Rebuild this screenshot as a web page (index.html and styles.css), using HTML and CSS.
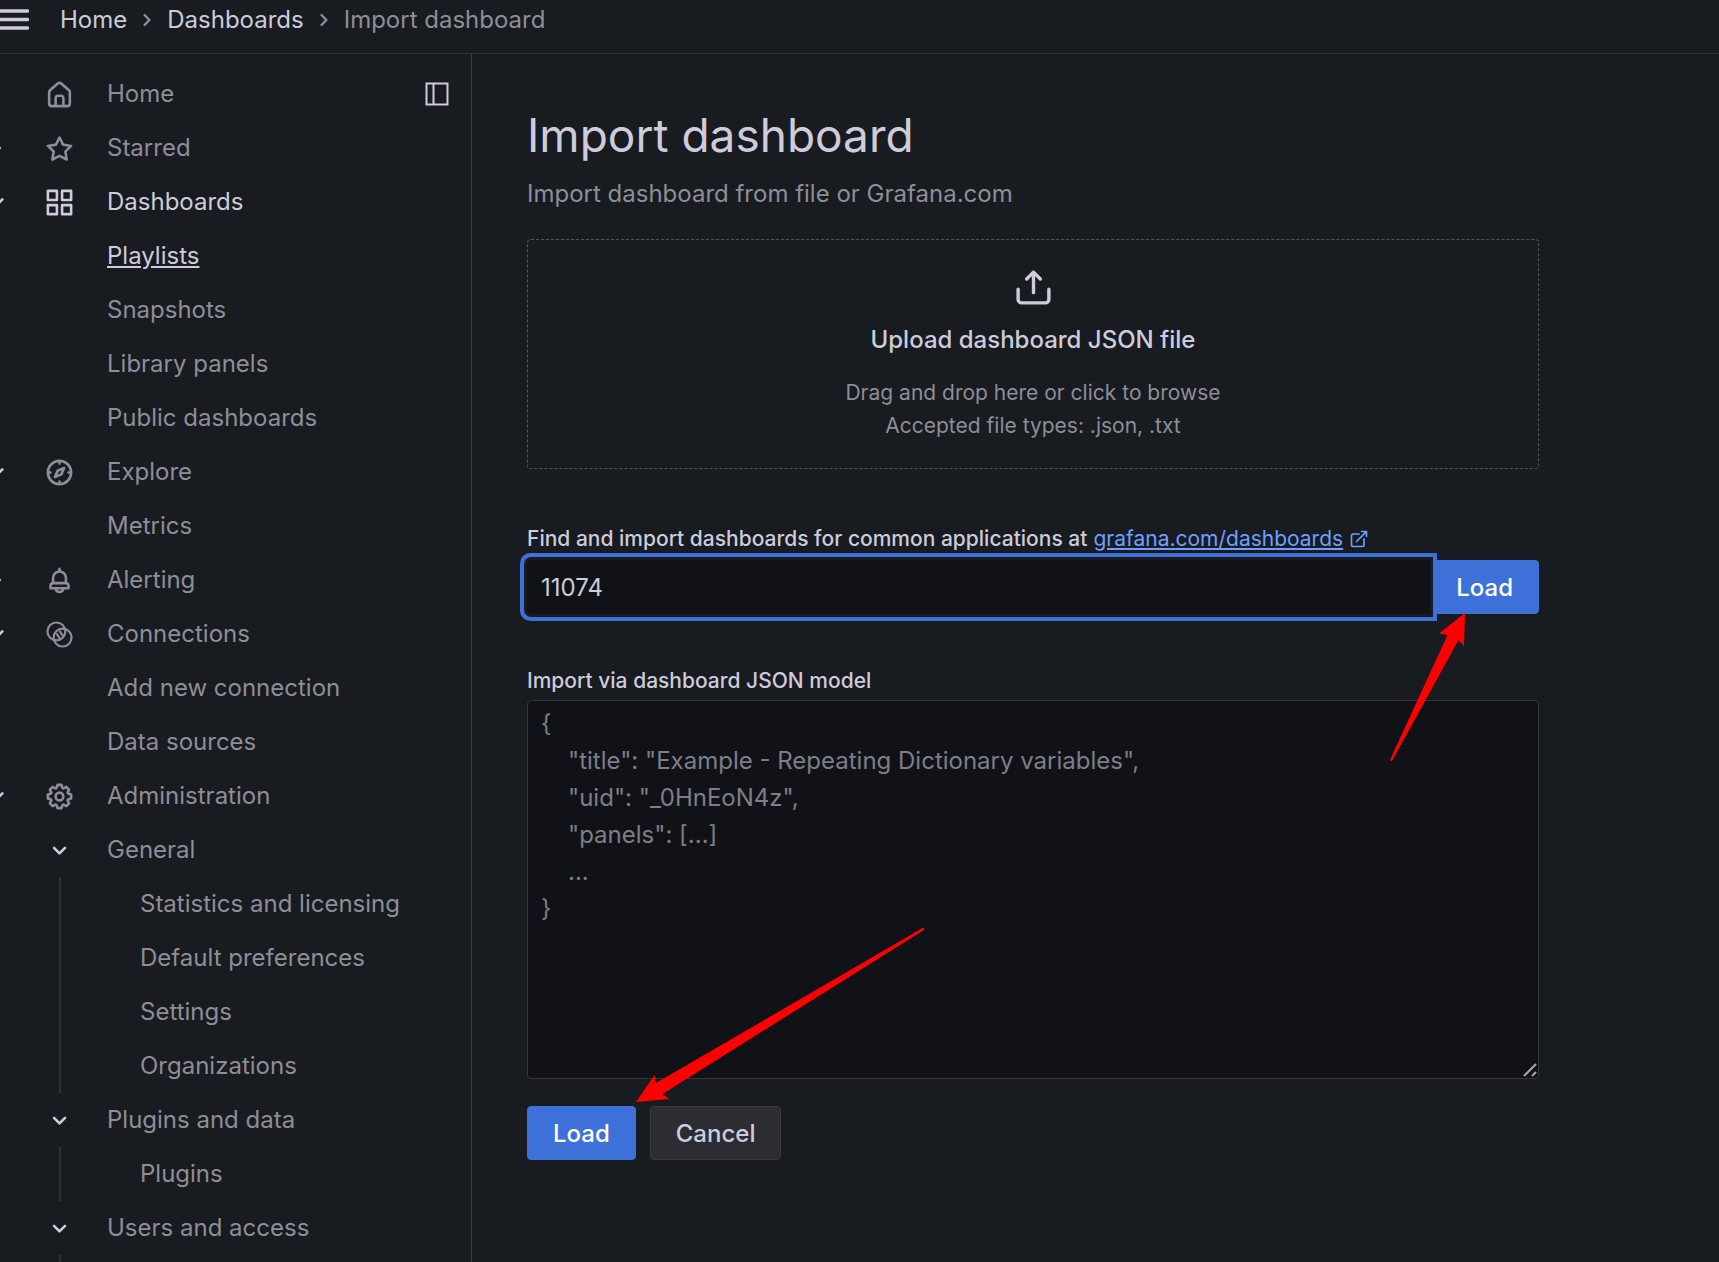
FILE: index.html
```html
<!DOCTYPE html>
<html lang="en">
<head>
<meta charset="utf-8">
<title>Import dashboard - Grafana</title>
<meta name="viewport" content="width=device-width, initial-scale=1">
<link rel="stylesheet" href="styles.css">
</head>
<body>
<svg class="sprite" aria-hidden="true">
  <symbol id="chevron-down" viewBox="0 0 24 24"><path d="M17 9.2a1 1 0 0 0-1.42 0L12 12.7 8.46 9.2a1 1 0 0 0-1.42 1.4l4.25 4.25a1 1 0 0 0 1.42 0L17 10.6a1 1 0 0 0 0-1.4Z"/></symbol>
  <symbol id="chevron-right" viewBox="0 0 24 24"><path d="M14.83 11.29 10.59 7.05a1 1 0 0 0-1.42 1.41L12.71 12l-3.54 3.54a1 1 0 0 0 1.42 1.41l4.24-4.24a1 1 0 0 0 0-1.42Z"/></symbol>
</svg>
<header class="topbar">
  <button class="menu-button" aria-label="Open menu">
    <svg width="29" height="22" viewBox="0 0 29 22"><path d="M0 2h27.500M0 10.500h27.500M0 19h27.500" fill="none" stroke="currentColor" stroke-width="3.400" stroke-linecap="round"/></svg>
  </button>
  <nav class="breadcrumbs" aria-label="Breadcrumbs">
    <a href="#">Home</a>
    <svg class="separator"><use href="#chevron-right"/></svg>
    <a href="#">Dashboards</a>
    <svg class="separator"><use href="#chevron-right"/></svg>
    <span class="current">Import dashboard</span>
  </nav>
</header>
<div class="layout">
  <nav class="sidebar" aria-label="Main navigation">
    <ul class="nav-list">
      <li class="nav-row">
        <svg class="nav-icon" viewBox="0 0 24 24"><path d="M20,8h0L14,2.740a3,3,0,0,0-4,0L4,8a3,3,0,0,0-1,2.260V19a3,3,0,0,0,3,3H18a3,3,0,0,0,3-3V10.250A3,3,0,0,0,20,8ZM14,20H10V15a1,1,0,0,1,1-1h2a1,1,0,0,1,1,1Zm5-1a1,1,0,0,1-1,1H16V15a3,3,0,0,0-3-3H11a3,3,0,0,0-3,3v5H6a1,1,0,0,1-1-1V10.250a1,1,0,0,1,.34-.75l6-5.250a1,1,0,0,1,1.320,0l6,5.250a1,1,0,0,1,.34.75Z"/></svg>
        <a href="#">Home</a>
        <button class="dock-button" aria-label="Undock menu"><svg width="24" height="24" viewBox="0 0 24 24"><path d="M1.500 1.500h21v21h-21zM8.500 1.500v21" fill="none" stroke="currentColor" stroke-width="2"/></svg></button>
      </li>
      <li class="nav-row">
        <svg class="chevron"><use href="#chevron-right"/></svg>
        <svg class="nav-icon" viewBox="0 0 24 24"><path d="M22,9.670A1,1,0,0,0,21.140,9l-5.690-.83L12.900,3a1,1,0,0,0-1.800,0L8.550,8.160,2.860,9a1,1,0,0,0-.81.68,1,1,0,0,0,.25,1l4.130,4-1,5.680A1,1,0,0,0,6.900,21.440L12,18.770l5.100,2.670a.93.93,0,0,0,.46.12,1,1,0,0,0,.59-.19,1,1,0,0,0,.4-1l-1-5.680,4.130-4A1,1,0,0,0,22,9.670Zm-6.150,4a1,1,0,0,0-.29.88l.72,4.200-3.760-2a1.060,1.060,0,0,0-.94,0l-3.760,2,.72-4.200a1,1,0,0,0-.29-.88l-3-3,4.210-.61a1,1,0,0,0,.76-.55L12,5.700l1.880,3.820a1,1,0,0,0,.76.55l4.210.61Z"/></svg>
        <a href="#">Starred</a>
      </li>
      <li class="nav-row active">
        <svg class="chevron"><use href="#chevron-down"/></svg>
        <svg class="nav-icon" viewBox="0 0 24 24"><path d="M10,13H3a1,1,0,0,0-1,1v7a1,1,0,0,0,1,1h7a1,1,0,0,0,1-1V14A1,1,0,0,0,10,13ZM9,20H4V15H9ZM21,2H14a1,1,0,0,0-1,1v7a1,1,0,0,0,1,1h7a1,1,0,0,0,1-1V3A1,1,0,0,0,21,2ZM20,9H15V4h5Zm1,4H14a1,1,0,0,0-1,1v7a1,1,0,0,0,1,1h7a1,1,0,0,0,1-1V14A1,1,0,0,0,21,13Zm-1,7H15V15h5ZM10,2H3A1,1,0,0,0,2,3v7a1,1,0,0,0,1,1h7a1,1,0,0,0,1-1V3A1,1,0,0,0,10,2ZM9,9H4V4H9Z"/></svg>
        <a href="#">Dashboards</a>
      </li>
      <li class="nav-row hovered"><a href="#">Playlists</a></li>
      <li class="nav-row"><a href="#">Snapshots</a></li>
      <li class="nav-row"><a href="#">Library panels</a></li>
      <li class="nav-row"><a href="#">Public dashboards</a></li>
      <li class="nav-row">
        <svg class="chevron"><use href="#chevron-down"/></svg>
        <svg class="nav-icon" viewBox="0 0 24 24"><path d="M12,2A10,10,0,1,0,22,12,10,10,0,0,0,12,2Zm1,17.930V19a1,1,0,0,0-2,0v.93A8,8,0,0,1,4.070,13H5a1,1,0,0,0,0-2H4.070A8,8,0,0,1,11,4.070V5a1,1,0,0,0,2,0V4.070A8,8,0,0,1,19.930,11H19a1,1,0,0,0,0,2h.93A8,8,0,0,1,13,19.930ZM15.140,7.550l-5,2.120a1,1,0,0,0-.52.52l-2.120,5a1,1,0,0,0,.21,1.100,1,1,0,0,0,.7.29.93.93,0,0,0,.4-.08l5-2.120a1,1,0,0,0,.52-.52l2.120-5a1,1,0,0,0-1.310-1.310Zm-2.490,5.100-2.280,1,1-2.280,2.280-1Z"/></svg>
        <a href="#">Explore</a>
      </li>
      <li class="nav-row"><a href="#">Metrics</a></li>
      <li class="nav-row">
        <svg class="chevron"><use href="#chevron-right"/></svg>
        <svg class="nav-icon" viewBox="0 0 24 24"><path d="M18,13.180V10a6,6,0,0,0-5-5.910V3a1,1,0,0,0-2,0V4.090A6,6,0,0,0,6,10v3.180A3,3,0,0,0,4,16v2a1,1,0,0,0,1,1H8.140a4,4,0,0,0,7.720,0H19a1,1,0,0,0,1-1V16A3,3,0,0,0,18,13.180ZM8,10a4,4,0,0,1,8,0v3H8Zm4,10a2,2,0,0,1-1.720-1h3.440A2,2,0,0,1,12,20Zm6-3H6V16a1,1,0,0,1,1-1H17a1,1,0,0,1,1,1Z"/></svg>
        <a href="#">Alerting</a>
      </li>
      <li class="nav-row">
        <svg class="chevron"><use href="#chevron-down"/></svg>
        <svg class="nav-icon" viewBox="0 0 24 24"><g fill="none" stroke="currentColor" stroke-width="1.700"><circle cx="9.600" cy="9.600" r="6.900"/><circle cx="14.400" cy="14.400" r="6.900"/><path d="M9.600 11.200l2.900 4.200M12 9.200l3 4.200"/></g></svg>
        <a href="#">Connections</a>
      </li>
      <li class="nav-row"><a href="#">Add new connection</a></li>
      <li class="nav-row"><a href="#">Data sources</a></li>
      <li class="nav-row">
        <svg class="chevron"><use href="#chevron-down"/></svg>
        <svg class="nav-icon" viewBox="0 0 24 24"><path d="M21.320,9.550l-1.890-.63.89-1.780A1,1,0,0,0,20.130,6L18,3.870a1,1,0,0,0-1.150-.19l-1.780.89-.63-1.890A1,1,0,0,0,13.500,2h-3a1,1,0,0,0-.95.68L8.920,4.570,7.140,3.680A1,1,0,0,0,6,3.870L3.870,6a1,1,0,0,0-.19,1.150l.89,1.780-1.890.63A1,1,0,0,0,2,10.500v3a1,1,0,0,0,.68.95l1.890.63-.89,1.780A1,1,0,0,0,3.870,18L6,20.130a1,1,0,0,0,1.150.19l1.780-.89.63,1.890a1,1,0,0,0,.95.68h3a1,1,0,0,0,.95-.68l.63-1.890,1.780.89A1,1,0,0,0,18,20.130L20.130,18a1,1,0,0,0,.19-1.150l-.89-1.780,1.890-.63A1,1,0,0,0,22,13.500v-3A1,1,0,0,0,21.320,9.550ZM20,12.780l-1.200.4A2,2,0,0,0,17.640,16l.57,1.140-1.100,1.100L16,17.640a2,2,0,0,0-2.790,1.160l-.4,1.200H11.220l-.4-1.200A2,2,0,0,0,8,17.640l-1.140.57-1.100-1.100L6.360,16A2,2,0,0,0,5.200,13.180L4,12.780V11.220l1.200-.4A2,2,0,0,0,6.360,8L5.790,6.890l1.100-1.100L8,6.360A2,2,0,0,0,10.820,5.200l.4-1.200h1.560l.4,1.200A2,2,0,0,0,16,6.360l1.140-.57,1.100,1.100L17.640,8a2,2,0,0,0,1.160,2.790l1.200.4ZM12,8a4,4,0,1,0,4,4A4,4,0,0,0,12,8Zm0,6a2,2,0,1,1,2-2A2,2,0,0,1,12,14Z"/></svg>
        <a href="#">Administration</a>
      </li>
      <li>
        <div class="nav-row"><svg class="nav-icon bright"><use href="#chevron-down"/></svg><a href="#">General</a></div>
        <ul class="sub-list">
          <li><a href="#">Statistics and licensing</a></li>
          <li><a href="#">Default preferences</a></li>
          <li><a href="#">Settings</a></li>
          <li><a href="#">Organizations</a></li>
        </ul>
      </li>
      <li>
        <div class="nav-row"><svg class="nav-icon bright"><use href="#chevron-down"/></svg><a href="#">Plugins and data</a></div>
        <ul class="sub-list">
          <li><a href="#">Plugins</a></li>
        </ul>
      </li>
      <li>
        <div class="nav-row"><svg class="nav-icon bright"><use href="#chevron-down"/></svg><a href="#">Users and access</a></div>
        <ul class="sub-list">
          <li></li>
        </ul>
      </li>
    </ul>
  </nav>
  <main class="page">
    <div class="content">
      <h1>Import dashboard</h1>
      <p class="subtitle">Import dashboard from file or Grafana.com</p>
      <button class="dropzone" type="button">
        <svg width="41" height="41" viewBox="0 0 24 24"><path d="M8.710,7.710,11,5.410V15a1,1,0,0,0,2,0V5.410l2.290,2.300a1,1,0,0,0,1.420,0,1,1,0,0,0,0-1.420l-4-4a1,1,0,0,0-.33-.21,1,1,0,0,0-.76,0,1,1,0,0,0-.33.21l-4,4A1,1,0,1,0,8.710,7.710ZM21,12a1,1,0,0,0-1,1v6a1,1,0,0,1-1,1H5a1,1,0,0,1-1-1V13a1,1,0,0,0-2,0v6a3,3,0,0,0,3,3H19a3,3,0,0,0,3-3V13A1,1,0,0,0,21,12Z"/></svg>
        <span class="dropzone-title">Upload dashboard JSON file</span>
        <small>Drag and drop here or click to browse<br>Accepted file types: .json, .txt</small>
      </button>
      <form class="field">
        <label class="with-link" for="gcom">Find and import dashboards for common applications at <a href="#">grafana.com/dashboards</a> <svg width="20" height="20" viewBox="0 0 24 24"><path d="M18,10.820a1,1,0,0,0-1,1V19a1,1,0,0,1-1,1H5a1,1,0,0,1-1-1V8A1,1,0,0,1,5,7h7.180a1,1,0,0,0,0-2H5A3,3,0,0,0,2,8V19a3,3,0,0,0,3,3H16a3,3,0,0,0,3-3V11.820A1,1,0,0,0,18,10.820Zm3.920-8.200a1,1,0,0,0-.54-.54A1,1,0,0,0,21,2H15a1,1,0,0,0,0,2h3.590L8.290,14.290a1,1,0,0,0,0,1.420,1,1,0,0,0,1.420,0L20,5.410V9a1,1,0,0,0,2,0V3A1,1,0,0,0,21.920,2.620Z"/></svg></label>
        <div class="input-group">
          <input id="gcom" type="text" value="11074">
          <button class="button primary" type="button">Load</button>
        </div>
      </form>
      <form class="field">
        <label for="json-model">Import via dashboard JSON model</label>
        <div class="textarea-wrap">
          <textarea id="json-model" placeholder="{&#10;    &quot;title&quot;: &quot;Example - Repeating Dictionary variables&quot;,&#10;    &quot;uid&quot;: &quot;_0HnEoN4z&quot;,&#10;    &quot;panels&quot;: [...]&#10;    ...&#10;}"></textarea>
          <svg class="resize-grip" width="14" height="14" viewBox="0 0 14 14"><path d="M1 13L13 1M9 13l4-4" fill="none" stroke="#a8a8ac" stroke-width="2"/></svg>
        </div>
        <div class="actions">
          <button class="button primary" type="button">Load</button>
          <button class="button secondary" type="button">Cancel</button>
        </div>
      </form>
      <svg class="arrow arrow-top" width="76" height="149" viewBox="0 0 76 149"><path d="M75 0 49 20.500 57.500 22 0 147 1 148 2 148 68.500 27 74 33Z"/></svg>
      <svg class="arrow arrow-bottom" width="290" height="176" viewBox="0 0 290 176"><path d="M0 175 18.500 148 20 156 286.500 1 288 1 288 3 26.500 167 33 172Z"/></svg>
    </div>
  </main>
</div>
</body>
</html>
```

FILE: styles.css
```css
:root {
  --bg: #181b1f;
  --canvas: #111217;
  --text: #ccccdc;
  --muted: #8d8e99;
  --border: #2e3034;
  --blue: #3d71d9;
  --link: #6e9fff;
}

* { box-sizing: border-box; }

body {
  margin: 0;
  height: 100vh;
  overflow: hidden;
  display: flex;
  flex-direction: column;
  background: var(--bg);
  color: var(--text);
  font: 24px/37px Inter, sans-serif;
}

ul { list-style: none; margin: 0; padding: 0; }
a { color: inherit; text-decoration: none; }
button { font: inherit; color: inherit; padding: 0; border: 0; background: none; cursor: pointer; }
svg { fill: currentColor; flex: none; }
.sprite { position: absolute; width: 0; height: 0; }

.topbar {
  flex: none;
  height: 54px;
  display: flex;
  align-items: center;
  gap: 31px;
  padding-bottom: 14px;
  border-bottom: 1px solid var(--border);
}
.menu-button { display: flex; }
.breadcrumbs { display: flex; align-items: center; gap: 6px; }
.separator { width: 28px; height: 28px; color: var(--muted); }
.current { color: var(--muted); }

.layout { flex: 1; min-height: 0; display: flex; }

.sidebar {
  flex: none;
  width: 472px;
  padding: 13px 22px 0 0;
  border-right: 1px solid #3c3e42;
  overflow: hidden;
  color: var(--muted);
}
.nav-row {
  display: grid;
  grid-template-columns: 30px 31px 1fr auto;
  column-gap: 32px;
  align-items: center;
  height: 54px;
  margin-left: -18px;
}
.nav-row a { grid-column: 3; grid-row: 1; justify-self: start; }
.sidebar a { padding-bottom: 2px; }
.chevron { grid-column: 1; width: 30px; height: 30px; color: var(--text); }
.nav-icon { grid-column: 2; grid-row: 1; width: 31px; height: 31px; }
.active, .hovered, .bright, .dock-button { color: var(--text); }
.hovered a { text-decoration: underline; }
.dock-button { display: flex; grid-column: 4; grid-row: 1; }
.sub-list { margin-left: 59px; padding-left: 79px; border-left: 2px solid var(--border); }
.sub-list li { height: 54px; display: flex; align-items: center; }

.page { flex: 1; min-width: 0; padding: 54px 55px; }
.content { position: relative; max-width: 1012px; }

h1 { margin: 0 0 13px; font-size: 46px; line-height: 54px; font-weight: 400; }
.subtitle { margin: 0 0 27px; color: var(--muted); }

.dropzone {
  width: 100%;
  display: flex;
  flex-direction: column;
  align-items: center;
  padding: 27px 26px 26px;
  border: 1px dashed #54565b;
  border-radius: 4px;
}
.dropzone-title { margin: 13px 0 18px; font-weight: 500; }
small { font-size: 21px; line-height: 33px; color: var(--muted); }

.field { margin-top: 54px; }
label { display: block; margin-bottom: 6px; font-size: 21px; line-height: 26px; font-weight: 500; }
.with-link { display: flex; align-items: center; gap: 6px; line-height: 31px; color: var(--text); }
.with-link a { color: var(--link); font-weight: 400; text-decoration: underline; }
.with-link svg { color: var(--link); }

.input-group { display: flex; }
input, textarea {
  font: inherit;
  color: var(--text);
  background: var(--canvas);
  border: 1px solid #35363b;
  outline: none;
}
input {
  flex: 1;
  min-width: 0;
  height: 54px;
  padding: 0 13px;
  border-color: var(--canvas);
  border-radius: 4px 0 0 4px;
  position: relative;
  box-shadow: 0 0 0 3px var(--bg), 0 0 0 7px var(--blue);
}
.button { height: 54px; padding: 0 25px; border: 1px solid transparent; border-radius: 4px; font-weight: 500; }
.primary { background: var(--blue); border-color: var(--blue); color: #fff; }
.secondary { background: #2c2d32; border-color: #393a40; }
.input-group .button { border-radius: 0 4px 4px 0; }

.textarea-wrap { position: relative; display: flex; }
textarea { width: 100%; height: 379px; padding: 4px 13px; border-radius: 4px; resize: none; }
textarea::placeholder { color: #7d7e88; }
.resize-grip { position: absolute; right: 2px; bottom: 2px; }

.actions { display: flex; gap: 14px; margin-top: 27px; }

.arrow { position: absolute; fill: #f00; pointer-events: none; }
.arrow-top { top: 505px; right: 73px; }
.arrow-bottom { top: 819px; left: 109px; }
```
